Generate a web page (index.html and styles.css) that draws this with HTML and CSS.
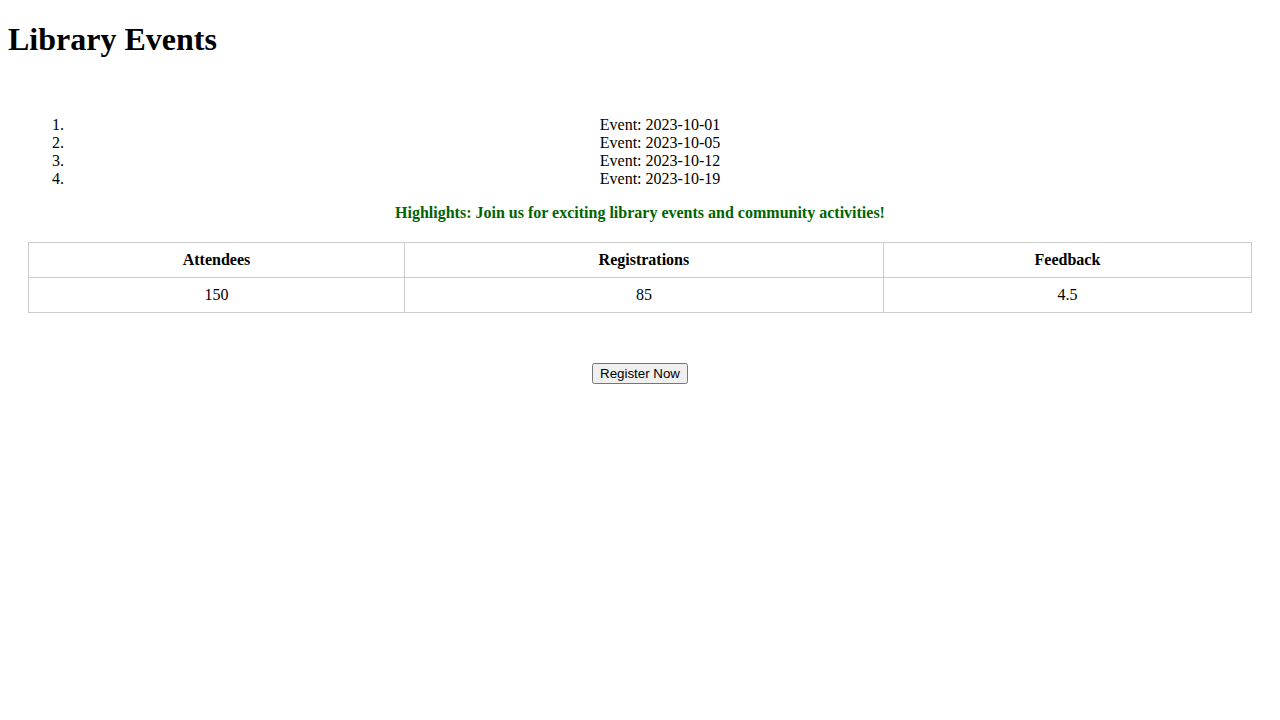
FILE: index.html
```html
<!DOCTYPE html>
<html>
<head>
<meta charset="utf-8">
<title>Library Events</title>
<link rel="stylesheet" href="styles.css">
</head>
<body>
<h1 class="title">Library Events</h1>
<div class="container">
  <ol class="events">
    <li>Event: 2023-10-01</li>
    <li>Event: 2023-10-05</li>
    <li>Event: 2023-10-12</li>
    <li>Event: 2023-10-19</li>
  </ol>
  <p class="highlights">Highlights: Join us for exciting library events and community activities!</p>
  <table class="stats">
    <thead>
      <tr><th>Attendees</th><th>Registrations</th><th>Feedback</th></tr>
    </thead>
    <tbody>
      <tr><td>150</td><td>85</td><td>4.5</td></tr>
    </tbody>
  </table>
  <div class="actions"><button class="register">Register Now</button></div>
</div>
</body>
</html>
```
FILE: styles.css
```css
body {
  font-family: "Liberation Serif", "Times New Roman", serif;
  margin: 0 8px 8px;
}
.title {
  font-size: 2em;
  margin: 0.67em 0;
}
.container {
  padding: 20px;
  text-align: center;
}
.events {
  margin: 16px 0;
  padding-left: 40px;
}
.highlights {
  color: #006400;
  font-weight: bold;
  margin: 16px 0;
}
.stats {
  width: 100%;
  border-collapse: collapse;
  margin: 20px 0;
}
.stats th,
.stats td {
  border: 1px solid #ccc;
  padding: 8px;
  text-align: center;
}
.actions {
  margin-top: 50px;
}
.register {
  font-family: "Liberation Sans", Arial, sans-serif;
  font-size: 13.333px;
}
```
